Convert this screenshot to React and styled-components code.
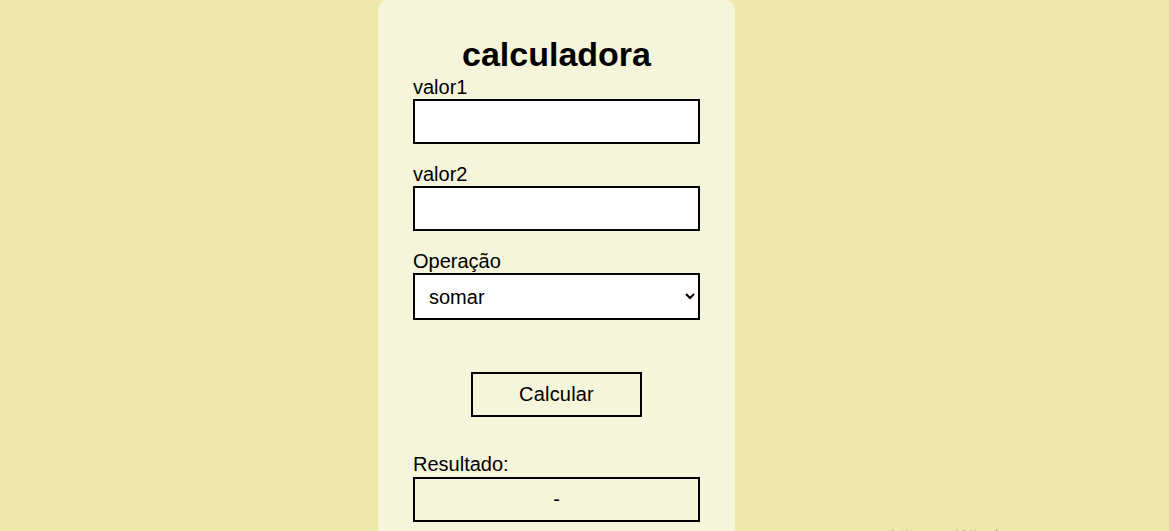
import styled, { createGlobalStyle } from "styled-components";

const GlobalStyle = createGlobalStyle`
    html, body {
        margin: 0;
        padding: 0;
        background-color: palegoldenrod;
        font-family: "Liberation Sans", Arial, sans-serif;
        overflow: hidden;
    }
`

const Page = styled.div`
    width: 100vw;
    height: 100vh;
    display: flex;
    justify-content: center;
    align-items: flex-start;
    padding-right: 56px;
    box-sizing: border-box;
`
const Card = styled.div`
    width: 357px;
    min-height: 600px;
    padding: 35px 35px 40px;
    box-sizing: border-box;
    background-color: beige;
    border-radius: 10px;
`
const Title = styled.h1`
    margin: 0 0 2px;
    text-align: center;
    font-size: 34px;
    line-height: 39px;
    font-weight: 700;
`
const Form = styled.form`
    display: flex;
    flex-direction: column;
`
const Label = styled.label`
    display: block;
    font-size: 20px;
    line-height: 23px;
`
const Input = styled.input`
    width: 100%;
    height: 45px;
    margin-bottom: 19px;
    box-sizing: border-box;
    border: 2px solid #000;
    background: #fff;
    font-size: 20px;
    font-family: inherit;
`
const Select = styled.select`
    width: 100%;
    height: 47px;
    box-sizing: border-box;
    border: 2px solid #000;
    border-radius: 0;
    background: #fff;
    padding: 0 10px;
    font-size: 20px;
    font-family: inherit;
    color: #000;
`
const Button = styled.button`
    width: 171px;
    height: 45px;
    margin: 52px auto 36px;
    border: 2px solid #000;
    background: transparent;
    font-size: 20px;
    font-family: inherit;
    letter-spacing: 0.2px;
    color: #000;
    cursor: pointer;
`
const Result = styled.div`
    height: 45px;
    margin-top: 1px;
    box-sizing: border-box;
    border: 2px solid #000;
    display: flex;
    align-items: center;
    justify-content: center;
    font-size: 20px;
`
const Watermark = styled.div`
    position: fixed;
    left: 887px;
    top: 524px;
    font-family: "Open Sans", sans-serif;
    font-size: 18px;
    color: rgba(120, 120, 120, 0.45);
    pointer-events: none;
`

const App = () => {
    return (
        <>
            <GlobalStyle />
            <Page>
                <Card>
                    <Title>calculadora</Title>
                    <Form onSubmit={(e) => e.preventDefault()}>
                        <Label>valor1</Label>
                        <Input type="number" />
                        <Label>valor2</Label>
                        <Input type="number" />
                        <Label>Operação</Label>
                        <Select defaultValue="somar">
                            <option value="somar">somar</option>
                            <option value="subtrair">subtrair</option>
                            <option value="multiplicar">multiplicar</option>
                            <option value="dividir">dividir</option>
                        </Select>
                        <Button type="submit">Calcular</Button>
                        <Label>Resultado:</Label>
                        <Result>-</Result>
                    </Form>
                </Card>
            </Page>
            <Watermark>Ativar o Windows</Watermark>
        </>
    )
}

export default App
